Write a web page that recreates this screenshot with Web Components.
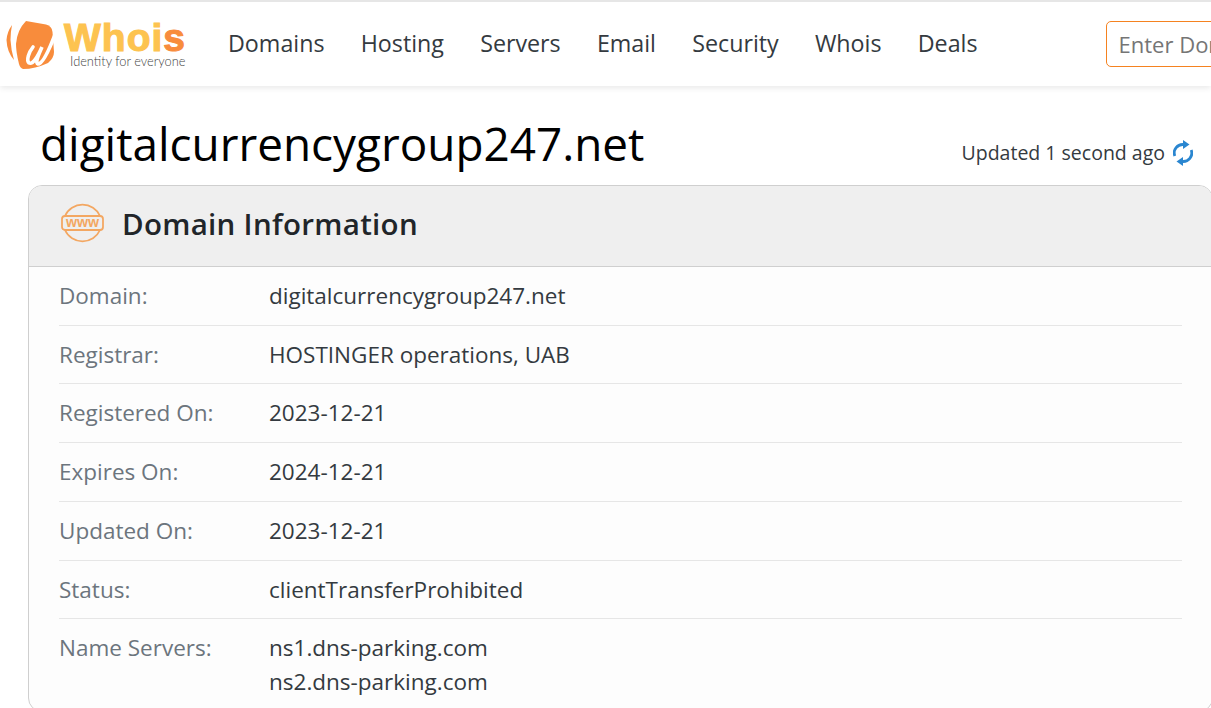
<!DOCTYPE html>
<html lang="en">
<head>
<meta charset="utf-8">
<title>digitalcurrencygroup247.net - Whois</title>
<style>
  html, body { margin: 0; padding: 0; height: 708px; overflow: hidden; background: #fff; }
  body { font-family: "Open Sans", "Liberation Sans", sans-serif; color: #212529; }
</style>
</head>
<body>
<site-header></site-header>
<page-title name="digitalcurrencygroup247.net" updated="Updated 1 second ago"></page-title>
<info-card heading="Domain Information">
  <info-row label="Domain:">digitalcurrencygroup247.net</info-row>
  <info-row label="Registrar:">HOSTINGER operations, UAB</info-row>
  <info-row label="Registered On:">2023-12-21</info-row>
  <info-row label="Expires On:">2024-12-21</info-row>
  <info-row label="Updated On:">2023-12-21</info-row>
  <info-row label="Status:">clientTransferProhibited</info-row>
  <info-row label="Name Servers:">ns1.dns-parking.com<br>ns2.dns-parking.com</info-row>
</info-card>

<script>
class SiteHeader extends HTMLElement {
  constructor() {
    super();
    this.attachShadow({ mode: 'open' });
    const links = ['Domains', 'Hosting', 'Servers', 'Email', 'Security', 'Whois', 'Deals'];
    this.shadowRoot.innerHTML = `
      <style>
        :host {
          display: flex;
          align-items: center;
          box-sizing: border-box;
          height: 86px;
          border-top: 2px solid #e6e6e6;
          background: #fff;
          box-shadow: 0 2px 6px rgba(0, 0, 0, 0.09);
          white-space: nowrap;
          overflow: hidden;
        }
        .logo {
          display: flex;
          align-items: center;
          flex: none;
          width: 228px;
        }
        .logo svg { display: block; flex: none; }
        .wordmark {
          display: flex;
          flex-direction: column;
          margin: 0 0 -1px 0;
        }
        .name {
          font: 900 39px/33px "Liberation Sans", Arial, sans-serif;
          -webkit-text-stroke: 1.1px currentColor;
          letter-spacing: 1px;
          color: #fdc350;
        }
        .name b { font-weight: inherit; color: #f88c3c; }
        .tag {
          font: 300 12.800px/14px Lato, "Open Sans", sans-serif;
          color: #444;
          margin-left: 6px;
        }
        nav { display: flex; gap: 36.200px; flex: none; margin-top: -2px; }
        nav a {
          font-size: 23.250px;
          font-weight: 500;
          line-height: 32px;
          color: #343a40;
          text-decoration: none;
        }
        .search {
          flex: none;
          box-sizing: border-box;
          margin-left: 128px;
          width: 300px;
          height: 46px;
          padding: 0 12px;
          border: 1px solid #f58220;
          border-radius: 5px;
          font-size: 22px;
          line-height: 44px;
          color: #757575;
        }
      </style>
      <div class="logo">
        <svg width="64" height="60" viewBox="0 0 64 60">
          <path fill="#f88c3c" d="M26 7L46 10.500Q52 12 52.500 18L54 38Q54 44 48 49Q35 55 23 55Q20 54 19 50Q16 38 16 30Q17 16 26 7z"/>
          <path fill="#f88c3c" d="M12 11Q7 18 6.500 26Q7 38 14 46Q11 36 10.500 26Q10.500 18 12 11z"/>
          <path fill="none" stroke="#fff" stroke-width="3.600" stroke-linecap="round" d="M33 33C29 38 26 46 29 49C33 51 38 42 42 33C38 42 35 49 38 50C43 50 50 34 56 18"/>
        </svg>
        <div class="wordmark">
          <span class="name">Whoi<b>s</b></span>
          <span class="tag">Identity for everyone</span>
        </div>
      </div>
      <nav>${links.map((l) => `<a href="#">${l}</a>`).join('')}</nav>
      <div class="search">Enter Domain</div>
    `;
  }
}

class PageTitle extends HTMLElement {
  constructor() {
    super();
    this.attachShadow({ mode: 'open' });
    this.shadowRoot.innerHTML = `
      <style>
        :host {
          display: flex;
          align-items: flex-end;
          justify-content: space-between;
          box-sizing: border-box;
          height: 99px;
          padding: 0 18px 0 40px;
        }
        h1 {
          margin: 0 0 11px;
          font-size: 45.880px;
          font-weight: 400;
          line-height: 62px;
          color: #000;
        }
        .updated {
          display: flex;
          align-items: center;
          gap: 8px;
          margin-bottom: 18px;
          font-size: 19.500px;
          line-height: 28px;
          color: #343a40;
        }
        svg { display: block; }
      </style>
      <h1>${this.getAttribute('name')}</h1>
      <div class="updated">
        <span>${this.getAttribute('updated')}</span>
        <svg width="20" height="26" viewBox="0 0 20 26">
          <g fill="none" stroke="#2a86d0" stroke-width="2.800">
            <path d="M1.800 16A8.500 8.500 0 0 1 11 4.600"/>
            <path d="M18.200 10A8.500 8.500 0 0 1 9 21.400"/>
          </g>
          <path fill="#2a86d0" d="M10 0L16.500 4.500L10 9z"/>
          <path fill="#2a86d0" d="M10 17L3.500 21.500L10 26z"/>
        </svg>
      </div>
    `;
  }
}

class InfoCard extends HTMLElement {
  constructor() {
    super();
    this.attachShadow({ mode: 'open' });
    this.shadowRoot.innerHTML = `
      <style>
        :host {
          display: block;
          box-sizing: border-box;
          width: 1185px;
          margin-left: 28px;
          border: 1px solid #cfcfcf;
          border-radius: 14px;
          background: #fdfdfd;
          overflow: hidden;
        }
        header {
          display: flex;
          align-items: center;
          gap: 18px;
          box-sizing: border-box;
          height: 80.750px;
          padding: 0 0 4px 31px;
          background: #efefef;
          border-bottom: 1px solid #cfcfcf;
        }
        h2 {
          margin: 0;
          font-size: 29.500px;
          font-weight: 600;
          letter-spacing: 0.3px;
          line-height: 40px;
          color: #212529;
        }
        svg { display: block; margin-top: -2px; }
        .rows { padding: 0 30px; }
      </style>
      <header>
        <svg width="44" height="40" viewBox="0 0 44 40" fill="none" stroke="#f3a762" stroke-width="1.800">
          <path d="M5 13A19 18.500 0 0 1 40 13"/>
          <path d="M5 27A19 18.500 0 0 0 40 27"/>
          <rect x="2" y="13" width="41" height="14" rx="3"/>
          <text x="6" y="24" textLength="33" lengthAdjust="spacingAndGlyphs" fill="#f3a762" stroke="none" font-family="Liberation Sans, sans-serif" font-weight="700" font-size="15">www</text>
        </svg>
        <h2>${this.getAttribute('heading')}</h2>
      </header>
      <div class="rows"><slot></slot></div>
    `;
  }
}

class InfoRow extends HTMLElement {
  constructor() {
    super();
    this.attachShadow({ mode: 'open' });
    this.shadowRoot.innerHTML = `
      <style>
        :host {
          display: flex;
          box-sizing: border-box;
          padding: 12px 0;
          border-bottom: 1px solid #e6e6e6;
          font-size: 22.500px;
          line-height: 1.5;
          color: #343a40;
        }
        :host(:last-child) { border-bottom: 0; }
        .label { flex: none; width: 210px; color: #6c757d; }
      </style>
      <div class="label">${this.getAttribute('label')}</div>
      <div><slot></slot></div>
    `;
  }
}

customElements.define('site-header', SiteHeader);
customElements.define('page-title', PageTitle);
customElements.define('info-card', InfoCard);
customElements.define('info-row', InfoRow);
</script>
</body>
</html>
